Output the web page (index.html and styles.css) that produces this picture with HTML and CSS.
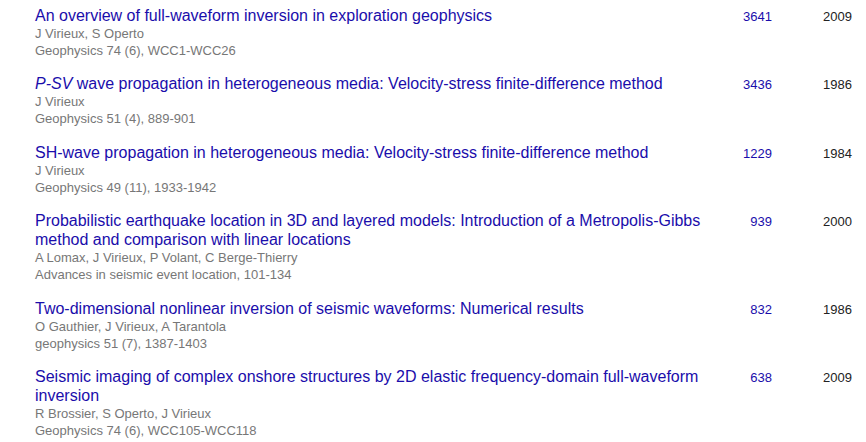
FILE: index.html
```html
<!DOCTYPE html>
<html>
<head>
<meta charset="utf-8">
<link rel="stylesheet" href="styles.css">
</head>
<body>
<div class="list">
  <div class="row">
    <div class="cell-title">
      <a class="title" href="#">An overview of full-waveform inversion in exploration geophysics</a>
      <div class="meta">J Virieux, S Operto</div>
      <div class="meta">Geophysics 74 (6), WCC1-WCC26</div>
    </div>
    <a class="cite" href="#">3641</a>
    <span class="year">2009</span>
  </div>
  <div class="row">
    <div class="cell-title">
      <a class="title" href="#"><i>P-SV</i> wave propagation in heterogeneous media: Velocity-stress finite-difference method</a>
      <div class="meta">J Virieux</div>
      <div class="meta">Geophysics 51 (4), 889-901</div>
    </div>
    <a class="cite" href="#">3436</a>
    <span class="year">1986</span>
  </div>
  <div class="row">
    <div class="cell-title">
      <a class="title" href="#">SH-wave propagation in heterogeneous media: Velocity-stress finite-difference method</a>
      <div class="meta">J Virieux</div>
      <div class="meta">Geophysics 49 (11), 1933-1942</div>
    </div>
    <a class="cite" href="#">1229</a>
    <span class="year">1984</span>
  </div>
  <div class="row">
    <div class="cell-title">
      <a class="title" href="#">Probabilistic earthquake location in 3D and layered models: Introduction of a Metropolis-Gibbs method and comparison with linear locations</a>
      <div class="meta">A Lomax, J Virieux, P Volant, C Berge-Thierry</div>
      <div class="meta">Advances in seismic event location, 101-134</div>
    </div>
    <a class="cite" href="#">939</a>
    <span class="year">2000</span>
  </div>
  <div class="row">
    <div class="cell-title">
      <a class="title" href="#">Two-dimensional nonlinear inversion of seismic waveforms: Numerical results</a>
      <div class="meta">O Gauthier, J Virieux, A Tarantola</div>
      <div class="meta">geophysics 51 (7), 1387-1403</div>
    </div>
    <a class="cite" href="#">832</a>
    <span class="year">1986</span>
  </div>
  <div class="row">
    <div class="cell-title">
      <a class="title" href="#">Seismic imaging of complex onshore structures by 2D elastic frequency-domain full-waveform inversion</a>
      <div class="meta">R Brossier, S Operto, J Virieux</div>
      <div class="meta">Geophysics 74 (6), WCC105-WCC118</div>
    </div>
    <a class="cite" href="#">638</a>
    <span class="year">2009</span>
  </div>
</div>
</body>
</html>
```
FILE: styles.css
```css
html, body {
  margin: 0;
  padding: 0;
  background: #fff;
}
body {
  font-family: "Liberation Sans", Arial, sans-serif;
  color: #222;
}
.list {
  padding: 0 14px 0 35px;
  margin-top: -2px;
}
.row {
  display: grid;
  grid-template-columns: 680px 57px 1fr;
  align-items: baseline;
  padding: 8px 0 7.4px;
}
.cell-title {
  display: flex;
  flex-direction: column;
  align-items: flex-start;
}
.title {
  font-size: 16px;
  line-height: 19px;
  color: #1a0dab;
  text-decoration: none;
}
.meta {
  font-size: 13px;
  line-height: 17px;
  color: #777;
}
.cite {
  font-size: 13px;
  line-height: 19px;
  color: #1a0dab;
  text-decoration: none;
  text-align: right;
}
.year {
  font-size: 13px;
  line-height: 19px;
  color: #222;
  text-align: right;
}
```
